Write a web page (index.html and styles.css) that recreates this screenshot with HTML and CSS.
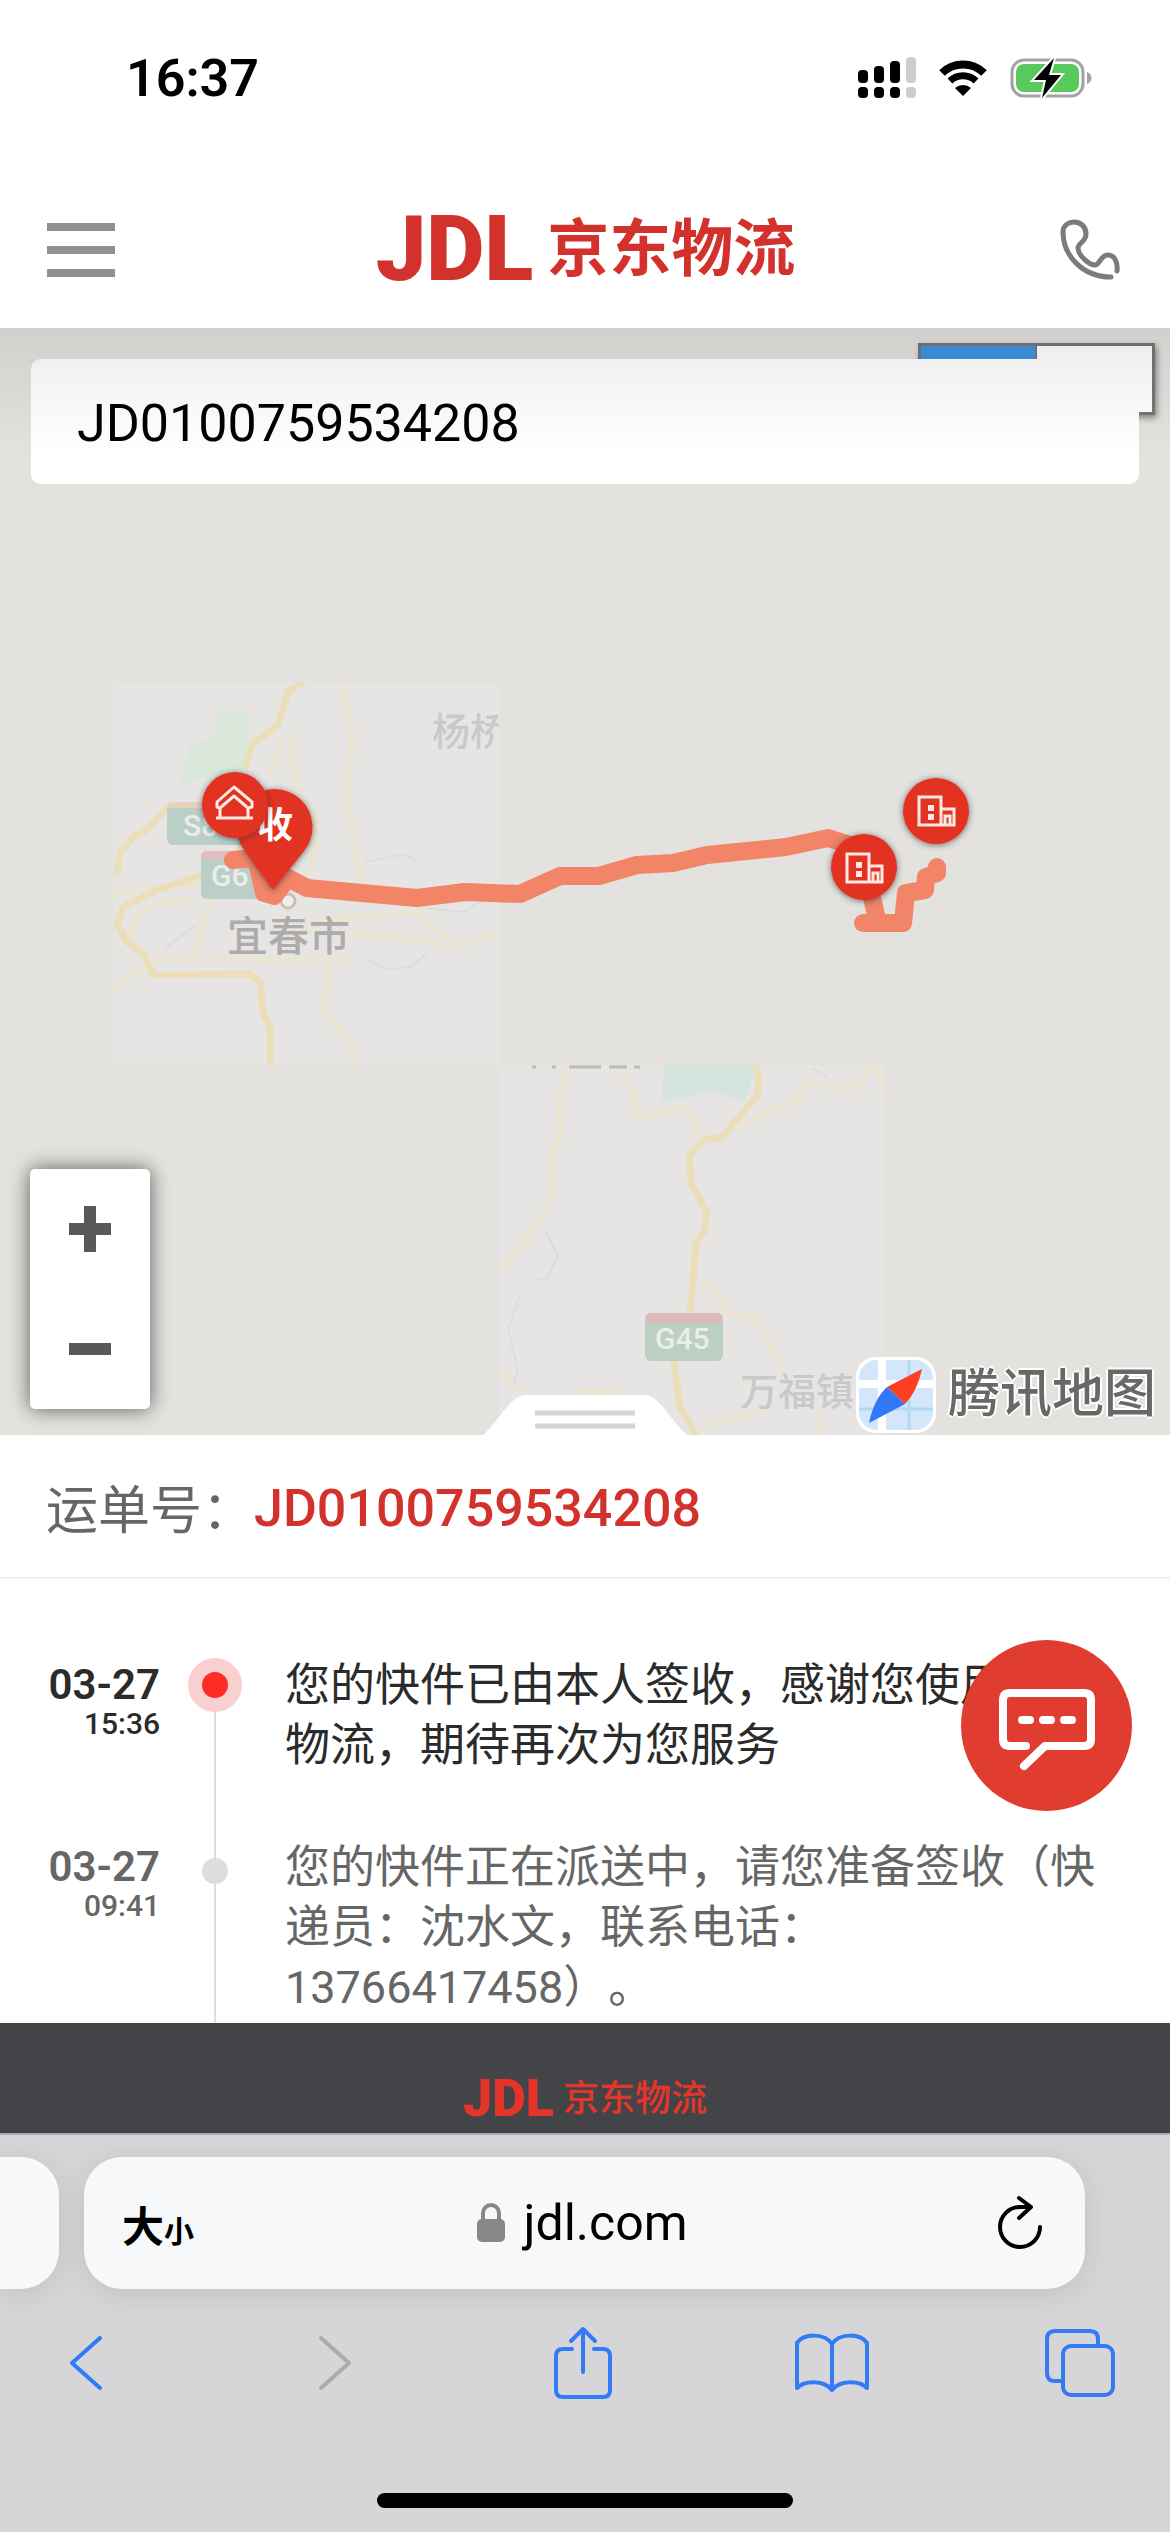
FILE: index.html
```html
<!DOCTYPE html>
<html lang="zh-CN">

<head>
    <meta charset="UTF-8">
    <meta name="viewport" content="width=device-width, initial-scale=1">
    <title>京东物流</title>
    <link rel="stylesheet" href="styles.css">
</head>

<body>

<!-- Barra de estado -->
<div class="status-bar">
    <span class="clock">16:37</span>
    <div class="status-icons">
        <svg width="58" height="42" viewBox="0 0 58 42">
            <g fill="#000">
                <rect x="0" y="13" width="10" height="13" rx="4"/>
                <rect x="16" y="9" width="10" height="17" rx="4"/>
                <rect x="32" y="4" width="10" height="22" rx="4"/>
                <rect x="0" y="30" width="10" height="11" rx="4"/>
                <rect x="16" y="30" width="10" height="11" rx="4"/>
                <rect x="32" y="30" width="10" height="11" rx="4"/>
            </g>
            <g fill="#cdcdcd">
                <rect x="48" y="0" width="10" height="26" rx="4"/>
                <rect x="48" y="30" width="10" height="11" rx="4"/>
            </g>
        </svg>
        <svg width="50" height="38" viewBox="0 0 50 38">
            <path d="M4 14a30 30 0 0 1 42 0" fill="none" stroke="#000" stroke-width="8"/>
            <path d="M12 22a19 19 0 0 1 26 0" fill="none" stroke="#000" stroke-width="7"/>
            <path d="M17 29a12 12 0 0 1 16 0l-8 8z" fill="#000"/>
        </svg>
        <svg width="82" height="42" viewBox="0 0 82 42">
            <rect x="2" y="3" width="71" height="36" rx="12" fill="none" stroke="#a2a2a4" stroke-width="3"/>
            <rect x="6" y="7" width="63" height="28" rx="8" fill="#58c95b"/>
            <path d="M77 15c6 2 6 10 0 12z" fill="#a2a2a4"/>
            <path d="M44 1L24 23h12l-4 18 19-23H39z" fill="#000" stroke="#fff" stroke-width="4" paint-order="stroke"/>
        </svg>
    </div>
</div>

<header class="header">
    <button class="icon-btn" aria-label="菜单">
        <svg width="68" height="54" viewBox="0 0 68 54" fill="#909090">
            <rect y="0" width="68" height="8"/>
            <rect y="23" width="68" height="8"/>
            <rect y="46" width="68" height="8"/>
        </svg>
    </button>
    <a href="#" class="logo"><span class="logo-mark">JDL</span><span class="logo-name">京东物流</span></a>
    <a href="#" class="icon-btn" aria-label="电话">
        <svg width="60" height="62" viewBox="0 0 60 62" fill="none" stroke="#7b7b7b" stroke-width="5" stroke-linecap="round" stroke-linejoin="round">
            <path d="M51 58C22 58 3 36 3 13 3 6 9 3 14 3c7 0 12 5 12 12 0 8-8 9-8 14 0 7 11 17 17 17 5 0 5-10 13-10 7 0 10 8 9 16"/>
        </svg>
    </a>
</header>

<!-- Mapa -->
<section class="map">
    <svg class="map-canvas" viewBox="0 328 1170 1107">
        <defs>
            <clipPath id="tile-a"><rect x="113" y="682" width="385" height="383"/></clipPath>
            <clipPath id="tile-b"><rect x="498" y="1065" width="385" height="370"/></clipPath>
            <filter id="pin-shadow" x="-30%" y="-30%" width="160%" height="160%">
                <feDropShadow dx="0" dy="1" stdDeviation="3" flood-color="#333" flood-opacity=".7"/>
            </filter>
            <g id="building" fill="none" stroke="#ffe9e2" stroke-width="3">
                <path d="M-17 14V-14H5V14zM5-2H18V14H5M9 14V5h5v9"/>
                <path d="M-8-3h6M-8 6h6" stroke-width="6"/>
            </g>
        </defs>

        <g clip-path="url(#tile-a)">
            <rect x="113" y="682" width="385" height="383" fill="#e6e5e3"/>
            <path d="M217 712l31-2v62l-52 8-18 8 12-42 27-14z" fill="#d9e8db"/>
            <g class="road-light">
                <path d="M340 682l12 51-5 67 6 33 8 50"/>
                <path d="M290 733l6 55 20 32-4 55M283 740l-13 35"/>
                <path d="M113 892l90-8M130 945c0-40 30-45 60-45M280 950l40-30 120-10M190 960l25-70"/>
                <path d="M337 933l46 2 74 12 41-15M415 900l8 22 30 18"/>
                <path d="M327 950v30l-4 30 27 33 5 22M113 988l40-28h200"/>
            </g>
            <g class="river">
                <path d="M365 862l40-8 12 8M368 960l20 10 24-4 14-12M425 908l40 4 14-10M165 948l30-22"/>
            </g>
            <g class="road">
                <path d="M303 682l-15 10-10 33-25 18-8 24"/>
                <path d="M117 875l3-22 13-16 14-7 18-20 40-5"/>
                <path d="M207 873l-50 17-34 17-6 16 10 19 16 11 10 22 97-1 10 8 3 31 7 14v40"/>
            </g>
            <g fill="#bbcfc7">
                <rect x="167" y="803" width="80" height="42" rx="6"/>
                <rect x="201" y="851" width="78" height="48" rx="6"/>
            </g>
            <path d="M201 859v-2a6 6 0 0 1 6-6h66v8z" fill="#e3bcbf"/>
            <path d="M167 808v-1a5 5 0 0 1 5-5h60v6z" fill="#e6d1bd"/>
            <text class="shield" x="183" y="836">S8</text>
            <text class="shield" x="211" y="886">G6</text>
            <text class="place" x="432" y="745">杨桥</text>
            <text class="place city" x="227" y="951">宜春市</text>
            <circle cx="288" cy="901" r="7" fill="#f0eceb" stroke="#cdbcbc" stroke-width="3"/>
        </g>

        <g clip-path="url(#tile-b)">
            <rect x="498" y="1065" width="385" height="370" fill="#e6e5e3"/>
            <path d="M665 1065h92l-13 38-31-13-53 13z" fill="#d5e5de"/>
            <g class="road-light">
                <path d="M568 1065l-9 35 2 37-11 16 3 30-11 37-42 50"/>
                <path d="M621 1073l13 17 2 27 45-9 14 6 3 23"/>
                <path d="M731 1130l66-30 9-17 44 7 26-25M881 1065v35"/>
                <path d="M704 1280l27 33 26 5 27 55M700 1427l66-17M819 1413v22M498 1370l28 25M577 1391h45"/>
            </g>
            <g class="river">
                <path d="M545 1230l13 25-10 22-14 3M520 1295l-12 35 10 40-4 14M812 1068l16 10"/>
            </g>
            <g class="road">
                <path d="M757 1065l2 28-37 44-18 3-15 15 2 28 16 30-3 19-8 11-5 64-17 56 6 44 18 32"/>
            </g>
            <path d="M532 1067h4M552 1067h4M569 1067h32M609 1067h18M634 1067h6" stroke="#bdbbb8" stroke-width="3"/>
            <rect x="645" y="1313" width="78" height="48" rx="6" fill="#bbcfc3"/>
            <path d="M645 1323v-4a6 6 0 0 1 6-6h66a6 6 0 0 1 6 6v4z" fill="#dfbabb"/>
            <text class="shield" x="655" y="1349">G45</text>
            <text class="place" x="740" y="1405">万福镇</text>
        </g>

        <!-- Ruta del envío -->
        <g class="route">
            <path d="M233 860l23-2 8 35 10 3 14-18 19 10 110 10 48-6 55 2 40-18h39l38-11 36-2 34-8 79-8 42-9 22 7 14 23 8 30 6 25h25l3-30 19-3 1-13 11-4v-6"/>
            <path d="M863 923h20"/>
        </g>

        <g filter="url(#pin-shadow)">
            <path d="M273 890l-28-39a38 38 0 1 1 59 0z" fill="#e13223"/>
        </g>
        <text class="pin-text" x="257" y="838">收</text>
        <g filter="url(#pin-shadow)" fill="#e13223">
            <circle cx="235" cy="805" r="33"/>
            <circle cx="864" cy="867" r="33"/>
            <circle cx="936" cy="811" r="33"/>
        </g>
        <path d="M217 807v-5l17-15 18 15v5l-4 1-14-12-14 12zM220 809v9M248 809v9M216 818h37" fill="none" stroke="#ffe9e2" stroke-width="3" stroke-linejoin="round"/>
        <use href="#building" x="864" y="868"/>
        <use href="#building" x="936" y="811"/>
    </svg>

    <div class="map-switch"><span class="switch-on"></span></div>

    <input type="text" class="search" aria-label="运单号" value="JD0100759534208">

    <div class="zoom-control">
        <button aria-label="放大">
            <svg width="42" height="46" viewBox="0 0 42 46" fill="#5a5858"><path d="M15 0h12v17h15v12H27v17H15V29H0V17h15z"/></svg>
        </button>
        <button aria-label="缩小">
            <svg width="42" height="12" viewBox="0 0 42 12" fill="#5a5858"><rect width="42" height="12"/></svg>
        </button>
    </div>

    <button class="drawer-handle" aria-label="展开">
        <svg width="204" height="40" viewBox="0 0 204 40">
            <path d="M0 40c12-10 20-26 31-35Q36 0 44 0h116q8 0 13 5c11 9 19 25 31 35z" fill="#fff"/>
            <path d="M52 18h100M52 31h100" stroke="#d5d5d5" stroke-width="5"/>
        </svg>
    </button>

    <div class="map-brand">
        <svg width="80" height="76" viewBox="0 0 80 76">
            <rect width="80" height="76" rx="20" fill="#fff"/>
            <rect x="3" y="3" width="74" height="70" rx="18" fill="#d3e6fa"/>
            <path d="M26 3v70M3 27h74" stroke="#fff" stroke-width="8"/>
            <path d="M53 3v70M3 52h74" stroke="#b3d8f3" stroke-width="3"/>
            <path d="M66 12L31 30l18 17q12-12 17-35z" fill="#fd3e21"/>
            <path d="M13 66L49 47 31 30Q18 42 13 66z" fill="#3278f6"/>
        </svg>
        <span>腾讯地图</span>
    </div>
</section>

<section class="waybill">
    <span class="waybill-label">运单号：</span>
    <span class="waybill-number">JD0100759534208</span>
</section>

<!-- Seguimiento -->
<main class="tracking">
    <ol class="timeline">
        <li class="step current">
            <div class="when"><b>03-27</b><span>15:36</span></div>
            <div class="marker"><i class="dot"></i></div>
            <p>您的快件已由本人签收，感谢您使用京东物流，期待再次为您服务</p>
        </li>
        <li class="step">
            <div class="when"><b>03-27</b><span>09:41</span></div>
            <div class="marker"><i class="dot"></i></div>
            <p>您的快件正在派送中，请您准备签收（快递员：沈水文，联系电话：13766417458）。</p>
        </li>
    </ol>
    <button class="chat-btn" aria-label="在线客服">
        <svg width="98" height="84" viewBox="0 0 98 84" fill="none" stroke="#fff" stroke-width="8" stroke-linecap="round" stroke-linejoin="round">
            <path d="M28 58H12q-7 0-7-7V12q0-7 7-7h74q7 0 7 7v39q0 7-7 7H47L26 78"/>
            <path d="M24 32h8M45 32h8M66 32h8"/>
        </svg>
    </button>
</main>

<footer class="footer">
    <a href="#" class="logo logo-small"><span class="logo-mark">JDL</span><span class="logo-name">京东物流</span></a>
</footer>

<!-- Barra del navegador -->
<nav class="browser">
    <div class="address-row">
        <div class="prev-tab"></div>
        <div class="address">
            <button class="text-size" aria-label="大小">大<small>小</small></button>
            <button class="url">
                <svg width="28" height="40" viewBox="0 0 28 40">
                    <rect x="0" y="16" width="28" height="23" rx="5" fill="#88888a"/>
                    <path d="M6 18v-8a8 8 0 0 1 16 0v8" fill="none" stroke="#88888a" stroke-width="4"/>
                </svg>
                jdl.com
            </button>
            <button class="reload" aria-label="重新载入">
                <svg width="46" height="56" viewBox="0 0 46 56" fill="none" stroke="#000" stroke-width="4" stroke-linecap="round" stroke-linejoin="round">
                    <path d="M43 32a20 20 0 1 1-20-20h11M22 3l12 9-12 11"/>
                </svg>
            </button>
        </div>
        <div class="next-space"></div>
    </div>
    <div class="tools">
        <button aria-label="后退">
            <svg width="34" height="56" viewBox="0 0 34 56"><path d="M31 3L3 28l28 25"/></svg>
        </button>
        <button aria-label="前进" disabled>
            <svg width="34" height="56" viewBox="0 0 34 56"><path d="M3 3l28 25L3 53"/></svg>
        </button>
        <button aria-label="分享">
            <svg width="58" height="74" viewBox="0 0 58 74"><path d="M18 23H9q-7 0-7 7v34q0 7 7 7h40q7 0 7-7V30q0-7-7-7h-9M29 46V3M17 15L29 3l12 12"/></svg>
        </button>
        <button aria-label="书签">
            <svg width="74" height="62" viewBox="0 0 74 62"><path d="M37 12C30 1 9 1 2 11v45c8-8 27-8 35 2 8-10 27-10 35-2V11C65 1 44 1 37 12zM37 12v46"/></svg>
        </button>
        <button aria-label="标签页">
            <svg width="70" height="68" viewBox="0 0 70 68"><path d="M53 16V10q0-8-8-8H10q-8 0-8 8v34q0 8 8 8h7"/><rect x="18" y="17" width="50" height="49" rx="8"/></svg>
        </button>
    </div>
    <div class="home-bar"></div>
</nav>

</body>

</html>
```
FILE: styles.css
```css
* {
    box-sizing: border-box;
}

body {
    margin: 0;
    min-height: 100vh;
    display: flex;
    flex-direction: column;
    background-color: #fff;
    color: #000;
    font-family: Roboto, "Noto Sans CJK SC", sans-serif;
}

button {
    padding: 0;
    border: none;
    background: none;
    color: inherit;
    font-family: inherit;
    cursor: pointer;
}

a {
    text-decoration: none;
}

svg {
    display: block;
    flex: none;
}

/* BARRA DE ESTADO */
.status-bar {
    height: 156px;
    padding: 0 78px 0 126px;
    display: flex;
    align-items: center;
    justify-content: space-between;
}

.clock {
    font-size: 52px;
    font-weight: 600;
}

.status-icons {
    display: flex;
    align-items: center;
    gap: 22px;
}

/* CABECERA */
.header {
    height: 172px;
    padding: 16px 45px 0 46px;
    display: flex;
    align-items: center;
    justify-content: space-between;
}

.icon-btn {
    width: 70px;
    display: flex;
    justify-content: center;
}

.logo {
    display: flex;
    align-items: center;
    gap: 14px;
    color: #d3312c;
    line-height: 1;
}

.logo-mark {
    font-size: 90px;
    font-weight: 900;
}

.logo-name {
    font-size: 62px;
    font-weight: 700;
}

/* MAPA */
.map {
    position: relative;
    background-color: #e3e2de;
}

.map-canvas {
    width: 100%;
    height: auto;
}

.map::after {
    content: "";
    position: absolute;
    inset: 0 0 auto;
    height: 130px;
    background: linear-gradient(rgba(0, 0, 0, 0.08), rgba(0, 0, 0, 0));
    pointer-events: none;
}

.road-light,
.road,
.river {
    fill: none;
    stroke: #ebe5d4;
    stroke-width: 6;
    stroke-linejoin: round;
}

.road {
    stroke: #ebdfbb;
    stroke-width: 7;
}

.river {
    stroke: #d9dde0;
    stroke-width: 2;
}

.shield {
    font-size: 30px;
    font-weight: 500;
    fill: #e9eeea;
}

.place {
    font-size: 38px;
    font-weight: 500;
    fill: #cbc9c8;
}

.city {
    font-size: 41px;
    fill: #aeacab;
}

.route {
    fill: none;
    stroke: #f28468;
    stroke-width: 18;
    stroke-linecap: round;
    stroke-linejoin: round;
}

.pin-text {
    font-size: 36px;
    font-weight: 700;
    fill: #fff;
}

.map-switch {
    position: absolute;
    top: 15px;
    right: 15px;
    width: 237px;
    height: 72px;
    border: 3px solid #747779;
    background-color: #fff;
    box-shadow: 2px 3px 6px rgba(0, 0, 0, 0.4);
}

.switch-on {
    display: block;
    width: 50%;
    height: 100%;
    border-right: 2px solid #747779;
    background-color: #3f93e2;
}

.search {
    position: absolute;
    top: 31px;
    left: 31px;
    width: calc(100% - 62px);
    height: 125px;
    padding: 4px 46px 0;
    border: none;
    border-radius: 10px;
    background-color: #fff;
    font-family: inherit;
    font-size: 52px;
    color: #000;
}

.zoom-control {
    position: absolute;
    left: 30px;
    bottom: 26px;
    width: 120px;
    border-radius: 5px;
    background-color: #fff;
    box-shadow: 0 0 20px rgba(0, 0, 0, 0.6);
}

.zoom-control button {
    width: 100%;
    height: 120px;
    display: flex;
    align-items: center;
    justify-content: center;
}

.drawer-handle {
    position: absolute;
    bottom: 0;
    left: 50%;
    transform: translateX(-50%);
}

.map-brand {
    position: absolute;
    right: 14px;
    bottom: 0;
    display: flex;
    align-items: center;
    gap: 12px;
    font-size: 52px;
    font-weight: 500;
    line-height: 80px;
    color: #6a6866;
    text-shadow: 2px 0 #fff, -2px 0 #fff, 0 2px #fff, 0 -2px #fff;
}

/* NUMERO DE GUIA */
.waybill {
    height: 144px;
    padding-left: 46px;
    display: flex;
    align-items: center;
    border-bottom: 2px solid #f0f0f0;
    font-size: 52px;
}

.waybill-label {
    color: #666;
}

.waybill-number {
    padding-top: 4px;
    font-weight: 500;
    color: #d3312c;
}

/* SEGUIMIENTO */
.tracking {
    position: relative;
    flex: 1;
    display: flex;
    padding-top: 75px;
}

.timeline {
    flex: 1;
    margin: 0;
    padding: 0 60px 0 0;
    list-style: none;
    display: flex;
    flex-direction: column;
}

.step {
    display: grid;
    grid-template-columns: 160px 54px 1fr;
    column-gap: 28px;
    color: #666;
}

.step:last-child {
    flex: 1;
}

.step p {
    margin: 2px 0 60px 15px;
    font-size: 45px;
    line-height: 60px;
    text-spacing-trim: space-all;
}

.step:last-child p {
    margin-bottom: 0;
}

.current,
.current p {
    color: #2b2b2b;
}

.when {
    padding-top: 6px;
    text-align: right;
}

.when b {
    display: block;
    font-size: 42px;
    line-height: 50px;
    font-weight: 600;
}

.when span {
    display: block;
    font-size: 30px;
    line-height: 36px;
    font-weight: 500;
    margin-top: -4px;
}

.marker {
    display: flex;
    justify-content: center;
    align-items: flex-start;
    background: linear-gradient(#ddd, #ddd) center bottom / 2px 100% no-repeat;
}

.dot {
    width: 26px;
    height: 26px;
    margin-top: 22px;
    border-radius: 50%;
    background-color: #ddd;
}

.current .marker {
    background-size: 2px calc(100% - 40px);
}

.current .dot {
    width: 54px;
    height: 54px;
    margin-top: 4px;
    border: 14px solid #facfcf;
    background-color: #fd2c24;
}

.chat-btn {
    position: absolute;
    top: 61px;
    right: 38px;
    width: 171px;
    height: 171px;
    padding-top: 8px;
    border-radius: 50%;
    background-color: #e03c30;
    display: flex;
    align-items: center;
    justify-content: center;
}

/* PIE */
.footer {
    height: 110px;
    padding-top: 44px;
    display: flex;
    justify-content: center;
    background-color: #434447;
}

.logo-small {
    height: 64px;
    gap: 9px;
    color: #e5352b;
}

.logo-small .logo-mark {
    font-size: 52px;
}

.logo-small .logo-name {
    font-size: 36px;
    font-weight: 500;
}

/* NAVEGADOR */
.browser {
    border-top: 2px solid #aaaaac;
    background-color: #d6d6d8;
}

.address-row {
    display: flex;
    gap: 25px;
    padding-top: 22px;
}

.prev-tab {
    width: 59px;
    border-radius: 0 38px 38px 0;
    background-color: #f7f8fa;
    box-shadow: 0 4px 30px rgba(0, 0, 0, 0.1);
}

.address {
    flex: 1;
    height: 132px;
    padding: 0 42px 0 38px;
    border-radius: 38px;
    background-color: #f7f8fa;
    box-shadow: 0 4px 30px rgba(0, 0, 0, 0.1);
    display: grid;
    grid-template-columns: 1fr auto 1fr;
    align-items: center;
}

.next-space {
    width: 60px;
}

.text-size {
    justify-self: start;
    font-size: 42px;
    font-weight: 600;
}

.text-size small {
    font-size: 30px;
}

.url {
    display: flex;
    align-items: center;
    gap: 18px;
    font-size: 50px;
}

.reload {
    justify-self: end;
}

.tools {
    height: 142px;
    padding: 34px 55px 0 51px;
    display: flex;
    align-items: flex-start;
    justify-content: space-between;
}

.tools button {
    width: 70px;
    height: 80px;
    display: flex;
    align-items: center;
    justify-content: center;
}

.tools svg {
    fill: none;
    stroke: #327af6;
    stroke-width: 4;
    stroke-linecap: round;
    stroke-linejoin: round;
}

.tools button:disabled svg {
    stroke: #ababad;
}

.home-bar {
    width: 416px;
    height: 15px;
    margin: 62px auto 24px;
    border-radius: 8px;
    background-color: #000;
}
```
